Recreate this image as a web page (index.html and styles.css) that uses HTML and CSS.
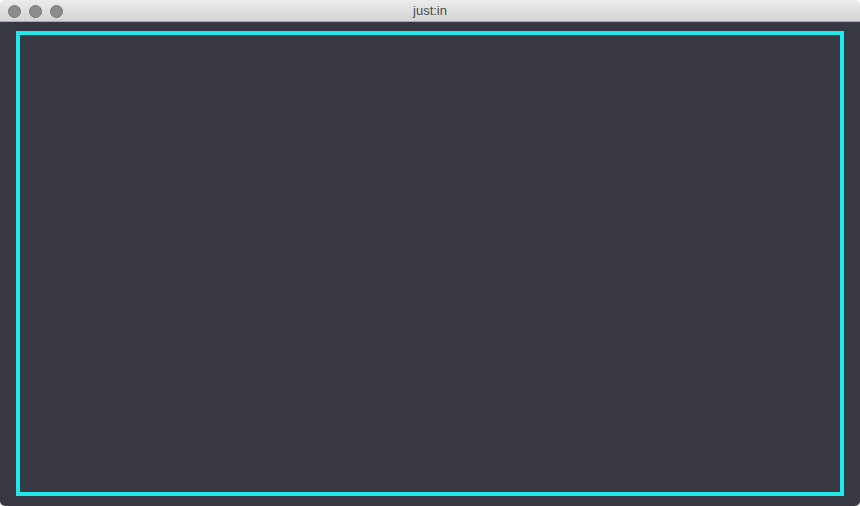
FILE: index.html
```html
<!DOCTYPE html>
<html lang="en">
<head>
    <meta charset="UTF-8">
    <title>just:in</title>
    <link rel="stylesheet" href="styles.css">
</head>
<body>
    <div class="window">
        <div class="titlebar">
            <div class="lights">
                <span class="light"></span>
                <span class="light"></span>
                <span class="light"></span>
            </div>
            <div class="title">just:in</div>
        </div>
        <div class="content">
            <div class="frame"></div>
        </div>
    </div>
</body>
</html>
```

FILE: styles.css
```css
html, body {
    margin: 0;
    height: 100%;
    background: #ffffff;
}
.window {
    height: 506px;
    display: flex;
    flex-direction: column;
    border-radius: 5px;
    overflow: hidden;
    font-family: "Liberation Sans", Arial, sans-serif;
}
.titlebar {
    height: 21px;
    flex: none;
    position: relative;
    display: flex;
    align-items: center;
    justify-content: center;
    background: linear-gradient(#ececec, #d4d4d4);
    border-bottom: 1px solid #a9a9a9;
}
.lights {
    position: absolute;
    left: 8px;
    top: 5px;
    display: flex;
    gap: 8px;
}
.light {
    width: 11px;
    height: 11px;
    border-radius: 50%;
    background: #8c8c8e;
    border: 0.5px solid #77777a;
}
.title {
    font-size: 13px;
    color: #4a4a4a;
}
.content {
    flex: 1;
    background: #373842;
    padding: 9px 16px 10px 16px;
    display: flex;
}
.frame {
    flex: 1;
    border: 4px solid #1ee8ea;
}
```
